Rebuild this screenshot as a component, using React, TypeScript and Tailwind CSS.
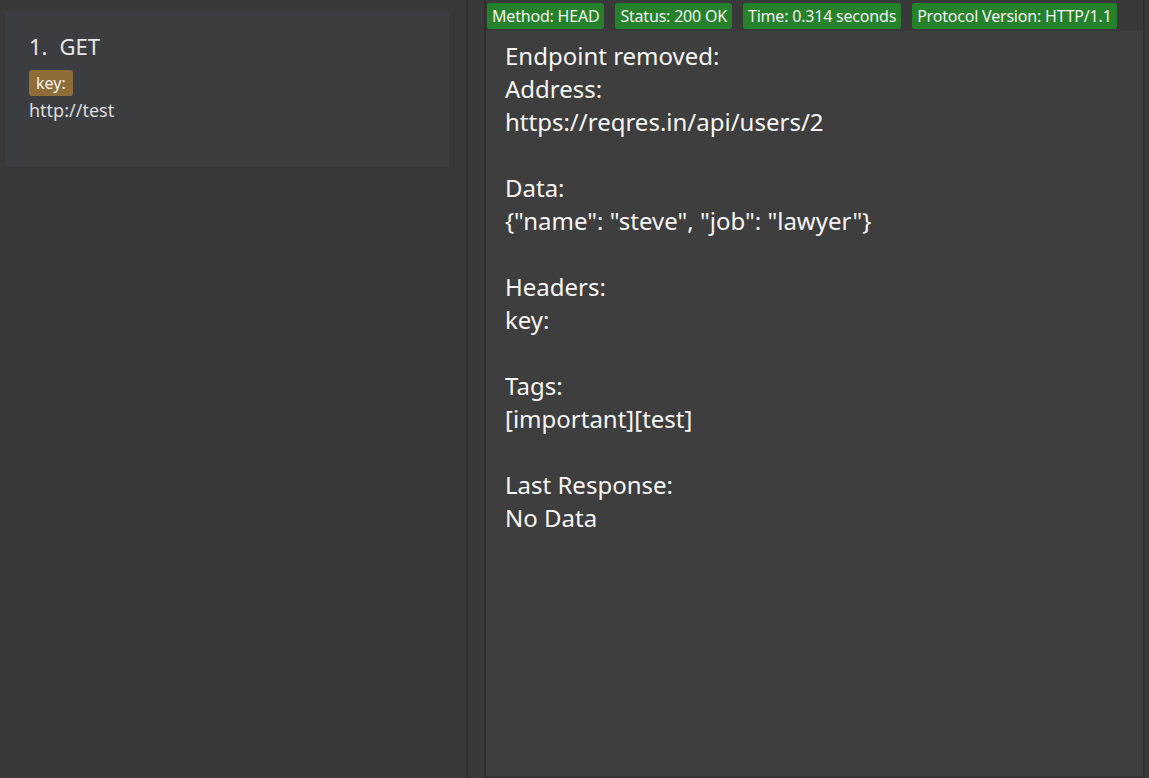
import React from 'react'

const badges = ['Method: HEAD', 'Status: 200 OK', 'Time: 0.314 seconds', 'Protocol Version: HTTP/1.1']

const lines = [
  'Endpoint removed:',
  'Address:',
  'https://reqres.in/api/users/2',
  '',
  'Data:',
  '{"name": "steve", "job": "lawyer"}',
  '',
  'Headers:',
  'key:',
  '',
  'Tags:',
  '[important][test]',
  '',
  'Last Response:',
  'No Data',
]

export default function App() {
  return (
    <div
      className="flex h-[778px] w-[1149px] overflow-hidden bg-[#383838] text-[#f2f2f2]"
      style={{ fontFamily: '"Noto Sans", "Open Sans", sans-serif' }}
    >
      {/* endpoint list */}
      <div className="w-[466px] shrink-0 pl-[5px] pr-[17px] pt-[11px]">
        <div className="h-[156px] bg-[#3c3d40] px-[24px] pt-[20px]">
          <div className="flex gap-[12px] text-[22px] leading-[30px] text-[#e8e8e8]">
            <span>1.</span>
            <span>GET</span>
          </div>
          <div className="mt-[9px] flex">
            <span className="rounded-[3px] bg-[#8e6d38] px-[7px] text-[16px] leading-[26px] text-[#f4f4f4]">key:</span>
          </div>
          <div className="text-[18px] leading-[28px] text-[#dedede]">http://test</div>
        </div>
      </div>

      <div className="w-[18px] shrink-0 border-l-2 border-[#2e2e2e] bg-[#393939]" />

      {/* detail */}
      <div className="flex w-[661px] shrink-0 flex-col border-x-[2px] border-[#2e2e2e] bg-[#393939]">
        <div className="flex h-[31px] gap-[11px] pl-[1px] pt-[3px]">
          {badges.map((b) => (
            <span
              key={b}
              className="h-[26px] rounded-[3px] bg-[#25812a] px-[5px] text-[16px] leading-[26px] tracking-[-0.2px] text-[#f2f2f2]"
            >
              {b}
            </span>
          ))}
        </div>
        <div className="flex-1 border-b-2 border-[#363636] bg-[#3e3e3e] pl-[19px] pt-[8px] text-[24px] leading-[33px] text-[#f6f6f6]">
          {lines.map((l, i) => (
            <div key={i} className="h-[33px] whitespace-pre">
              {l}
            </div>
          ))}
        </div>
      </div>
    </div>
  )
}
